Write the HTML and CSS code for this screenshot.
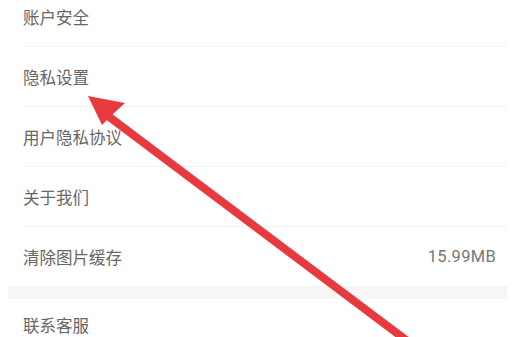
FILE: index.html
```html
<!DOCTYPE html>
<html>
<head>
    <meta charset="UTF-8">
    <title>设置</title>
    <link rel="stylesheet" href="styles.css">
</head>
<body>
    <div class="settings">
        <div class="group">
            <div class="row"><span>账户安全</span></div>
            <div class="row"><span>隐私设置</span></div>
            <div class="row"><span>用户隐私协议</span></div>
            <div class="row"><span>关于我们</span></div>
            <div class="row last"><span>清除图片缓存</span><span class="value">15.99MB</span></div>
        </div>
        <div class="gap"></div>
        <div class="group">
            <div class="row last short"><span>联系客服</span></div>
        </div>
    </div>
    <!-- red annotation arrow pointing at 隐私设置 -->
    <svg class="arrow" width="517" height="337" viewBox="0 0 517 337">
        <line x1="406" y1="340" x2="108" y2="116" stroke="#e8393e" stroke-width="8" stroke-linecap="round"/>
        <polygon points="88,96 125,103 113,114 102,125" fill="#e8393e"/>
    </svg>
</body>
</html>
```

FILE: styles.css
```css
/* page */
body {
    margin: 0;
    background-color: #ffffff;
    font-family: "Noto Sans CJK SC", "Noto Sans", sans-serif;
    overflow: hidden;
    position: relative;
    height: 337px;
}

/* settings list */
.settings {
    margin: -13px 10px 0 8px;
}

.group {
    background-color: #ffffff;
    padding-left: 15px;
}

.row {
    height: 59px;
    display: flex;
    align-items: center;
    justify-content: space-between;
    padding-right: 11px;
    border-bottom: 1px solid #f1f1f1;
    color: #666666;
    font-size: 16.5px;
    line-height: 20px;
}

.row.last {
    border-bottom: none;
}

/* last row is cut by the bottom of the screen */
.row.short {
    height: auto;
    padding-top: 16px;
}

.value {
    color: #777777;
    font-family: "Roboto", "Noto Sans", sans-serif;
    font-size: 16.5px;
    letter-spacing: 0.3px;
}

.gap {
    height: 13px;
    background-color: #f6f6f6;
}

/* annotation overlay */
.arrow {
    position: absolute;
    left: 0;
    top: 0;
}
```
